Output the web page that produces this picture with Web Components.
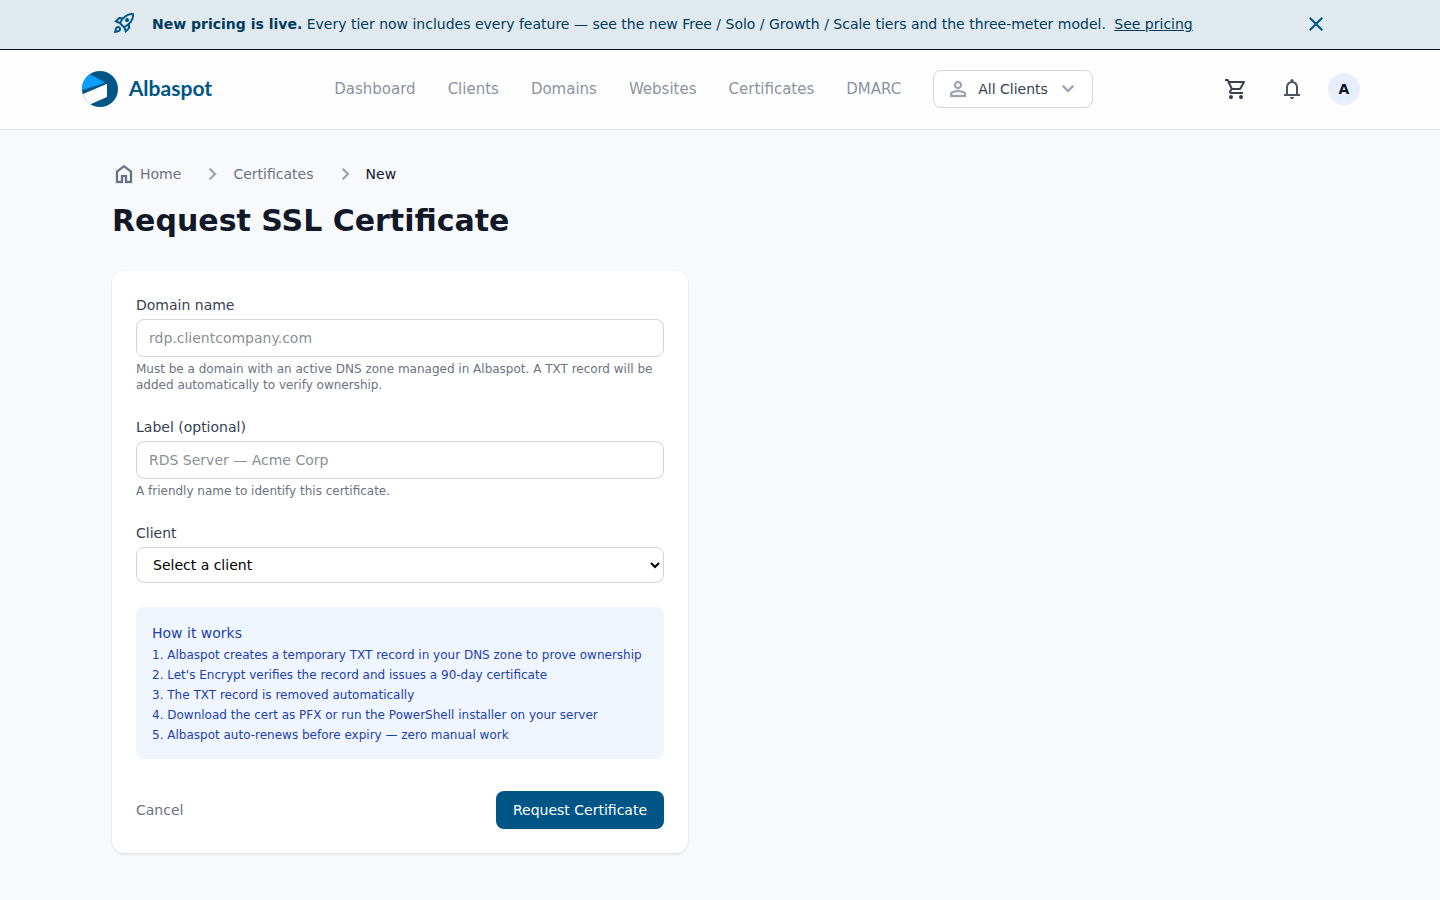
<!DOCTYPE html>
<html lang="en"><head><meta charset="utf-8"><title>Request SSL Certificate</title>
<style>
*{box-sizing:border-box}
html,body{margin:0}
body{background:#f8f9fd;font:14px/20px "DejaVu Sans",sans-serif;color:#111827;min-height:900px}
main{width:1216px;margin:0 auto;padding-top:32px}
h1{margin:17px 0 32px;font-size:30px;line-height:36px;font-weight:700;color:#111827}
</style></head>
<body>
<promo-banner></promo-banner>
<site-header></site-header>
<main>
<bread-crumbs></bread-crumbs>
<h1>Request SSL Certificate</h1>
<certificate-form></certificate-form>
</main>
<script>
const ICONS={
rocket:'m226-559 78 33q14-28 29-54t33-52l-56-11-84 84Zm142 83 114 113q42-16 90-49t90-75q70-70 109.5-155.5T806-800q-72-5-158 34.5T492-656q-42 42-75 90t-49 90Zm178-65q-23-23-23-56.5t23-56.5q23-23 57-23t57 23q23 23 23 56.5T660-541q-23 23-57 23t-57-23Zm19 321 84-84-11-56q-26 18-52 32.5T532-299l33 79Zm313-653q19 121-23.5 235.5T708-419l20 99q4 20-2 39t-20 33L538-80l-84-197-171-171-197-84 167-168q14-14 33.5-20t39.5-2l99 20q104-104 218-147t235-24ZM157-321q35-35 85.5-35.5T328-322q35 35 34.5 85.5T327-151q-25 25-83.5 43T82-76q14-103 32-161.5t43-83.5Zm57 56q-10 10-20 36.5T180-175q27-4 53.5-13.5T270-208q12-12 13-29t-11-29q-12-12-29-11.5T214-265Z',
close:'m256-200-56-56 224-224-224-224 56-56 224 224 224-224 56 56-224 224 224 224-56 56-224-224-224 224Z',
person:'M480-480q-66 0-113-47t-47-113q0-66 47-113t113-47q66 0 113 47t47 113q0 66-47 113t-113 47ZM160-160v-112q0-34 17.5-62.5T224-378q62-31 126-46.5T480-440q66 0 130 15.5T736-378q29 15 46.5 43.5T800-272v112H160Zm80-80h480v-32q0-11-5.5-20T700-306q-54-27-109-40.5T480-360q-56 0-111 13.5T260-306q-9 5-14.5 14t-5.5 20v32Zm240-320q33 0 56.5-23.5T560-640q0-33-23.5-56.5T480-720q-33 0-56.5 23.5T400-640q0 33 23.5 56.5T480-560Z',
expand:'M480-344 240-584l56-56 184 184 184-184 56 56-240 240Z',
chevron:'M504-480 320-664l56-56 240 240-240 240-56-56 184-184Z',
home:'M240-200h120v-240h240v240h120v-360L480-740 240-560v360Zm-80 80v-480l320-240 320 240v480H520v-240h-80v240H160Z',
bell:'M160-200v-80h80v-280q0-83 50-147.5T420-792v-28q0-25 17.5-42.5T480-880q25 0 42.5 17.5T540-820v28q80 20 130 84.5T720-560v280h80v80H160ZM480-80q-33 0-56.5-23.5T400-160h160q0 33-23.5 56.5T480-80ZM320-280h320v-280q0-66-47-113t-113-47q-66 0-113 47t-47 113v280Z',
cart:'M280-80q-33 0-56.5-23.5T200-160q0-33 23.5-56.5T280-240q33 0 56.5 23.5T360-160q0 33-23.5 56.5T280-80Zm400 0q-33 0-56.5-23.5T600-160q0-33 23.5-56.5T680-240q33 0 56.5 23.5T760-160q0 33-23.5 56.5T680-80ZM246-720l96 200h280l110-200H246Zm-38-80h590q23 0 35 20.5t1 41.5L692-482q-11 20-29.500 31T622-440H324l-44 80h480v80H280q-45 0-68-39.500t-2-78.500l54-98-144-304H40v-80h130l38 80Z'};
function define(name,html){
 const t=document.createElement('template');
 t.innerHTML='<style>*{box-sizing:border-box}a{color:inherit;text-decoration:none}button{font:inherit;color:inherit;background:none;border:0;padding:0}</style>'+html;
 customElements.define(name,class extends HTMLElement{
  constructor(){super();this.attachShadow({mode:'open'}).append(t.content.cloneNode(true));}
 });
}
customElements.define('ui-icon',class extends HTMLElement{
 connectedCallback(){
  if(this.shadowRoot)return;
  this.attachShadow({mode:'open'}).innerHTML=`<style>:host{display:block;flex:none;width:24px;height:24px}svg{display:block;width:100%;height:100%;stroke:currentColor;stroke-width:var(--icon-stroke,0)}</style><svg viewBox="0 -960 960 960" fill="currentColor" aria-hidden="true"><path d="${ICONS[this.getAttribute('name')]}"/></svg>`;
 }
});
define('promo-banner',`<style>
:host{display:flex;height:50px;background:#dfe9ee;border-bottom:1px solid #0f172a;color:#003a5d;padding:0 112px 1px;align-items:center}
ui-icon{color:#005487}.rocket{margin-bottom:2px}p{margin:0 0 0 16px;flex:1;white-space:nowrap}a{text-decoration:underline;margin-left:4px}
</style><ui-icon class="rocket" name="rocket"></ui-icon><p><b>New pricing is live.</b> Every tier now includes every feature — see the new Free / Solo / Growth / Scale tiers and the three-meter model. <a href="#">See pricing</a></p><button aria-label="Dismiss"><ui-icon name="close"></ui-icon></button>`);
define('brand-logo',`<style>
:host{display:flex;align-items:center;width:132px;height:40px;color:#005587}
svg{display:block;flex:none}
</style><svg width="136" height="40" viewBox="0 0 136 40"><defs><clipPath id="c"><circle cx="20" cy="20" r="18"/></clipPath></defs><g clip-path="url(#c)"><path fill="#005587" d="M0 0h40v40H0z"/><path fill="#0a9fff" d="M0 21.500V5.500h10.500L24.500 13.300 22 15z"/><path fill="#fff" d="M0 26.300l27-11.600V28L10.500 35.200 0 40z"/></g><text x="48.700" y="26.700" textLength="83.500" lengthAdjust="spacingAndGlyphs" font-family="Lato,sans-serif" font-size="20" font-weight="700" fill="#005587">Albaspot</text></svg>`);
define('client-switcher',`<style>
:host{display:block}button{display:flex;align-items:center;width:160px;height:38px;border:1px solid #d1d5db;border-radius:8px;padding:0 12px;color:#374151;background:#fff;font-size:14px;line-height:20px;white-space:nowrap}
ui-icon{color:#9ca3af;--icon-stroke:12px}.label{margin:0 8px}
</style><button><ui-icon name="person"></ui-icon><span class="label">All Clients</span><ui-icon name="expand"></ui-icon></button>`);
define('site-header',`<style>
:host{display:flex;height:80px;background:#fefefe;border-bottom:1px solid #e5e7eb;align-items:center;padding:0 80px 1px;justify-content:space-between}
nav{display:flex;align-items:center;gap:32px;font-size:15px;color:#8b93a1;margin-right:8.600px}
.tools{display:flex;align-items:center;color:#374151}.tools ui-icon{margin-right:32px}.tools ui-icon+ui-icon{margin-right:24px;color:#4b5563}
.avatar{width:32px;height:32px;border-radius:50%;background:#e8eefc;color:#0f172a;font-weight:700;display:grid;place-items:center}
</style><brand-logo></brand-logo><nav><a>Dashboard</a><a>Clients</a><a>Domains</a><a>Websites</a><a>Certificates</a><a>DMARC</a><client-switcher></client-switcher></nav><div class="tools"><ui-icon name="cart"></ui-icon><ui-icon name="bell"></ui-icon><span class="avatar">A</span></div>`);
define('bread-crumbs',`<style>
:host{display:flex;align-items:center;height:24px;color:#6b7280;--icon-stroke:12px}.sep{color:#9ca3af}.home{display:flex;align-items:center;gap:4px}
.sep{margin:0 8px 0 20.100px}strong{font-weight:400;color:#0f172a}
</style><a class="home"><ui-icon name="home"></ui-icon>Home</a><ui-icon class="sep" name="chevron"></ui-icon><a>Certificates</a><ui-icon class="sep" name="chevron"></ui-icon><strong>New</strong>`);
define('form-field',`<style>
:host{display:block;margin-bottom:24px}label{display:block;color:#374151;margin-bottom:4px}
::slotted(small){display:block;font-size:12px;line-height:16px;color:#6b7280;margin-top:4px}
</style><label><slot name="label"></slot></label><slot></slot>`);
define('how-it-works',`<style>
:host{display:block;height:152px;padding:16px;background:#eff6ff;border-radius:8px;color:#1e40af}
p{margin:0 0 4px}ol{list-style:none;margin:0;padding:0;font-size:12px;line-height:16px;display:grid;gap:4px;white-space:nowrap}
</style><p>How it works</p><ol><li>1. Albaspot creates a temporary TXT record in your DNS zone to prove ownership</li><li>2. Let's Encrypt verifies the record and issues a 90-day certificate</li><li>3. The TXT record is removed automatically</li><li>4. Download the cert as PFX or run the PowerShell installer on your server</li><li>5. Albaspot auto-renews before expiry — zero manual work</li></ol>`);
define('certificate-form',`<style>
:host{display:block;width:576px;height:582px;padding:24px;background:#fff;border-radius:12px;box-shadow:0 1px 3px rgba(0,0,0,.1),0 1px 2px -1px rgba(0,0,0,.1)}
input,select{display:block;width:100%;height:38px;border:1px solid #d1d5db;border-radius:8px;background:#fff;font:inherit;padding:8px 12px;color:#000}
input::placeholder{color:#8c8f94}select{height:36px}
footer{display:flex;align-items:center;justify-content:space-between;margin-top:32px;color:#6b7280}
.submit{height:38px;width:168px;border-radius:8px;background:#005587;color:#fff;box-shadow:0 1px 2px rgba(0,0,0,.05)}
</style>
<form-field><span slot="label">Domain name</span><input placeholder="rdp.clientcompany.com"><small>Must be a domain with an active DNS zone managed in Albaspot. A TXT record will be added automatically to verify ownership.</small></form-field>
<form-field><span slot="label">Label (optional)</span><input placeholder="RDS Server — Acme Corp"><small>A friendly name to identify this certificate.</small></form-field>
<form-field><span slot="label">Client</span><select><option>Select a client</option></select></form-field>
<how-it-works></how-it-works>
<footer><a>Cancel</a><button class="submit">Request Certificate</button></footer>`);
</script></body></html>
